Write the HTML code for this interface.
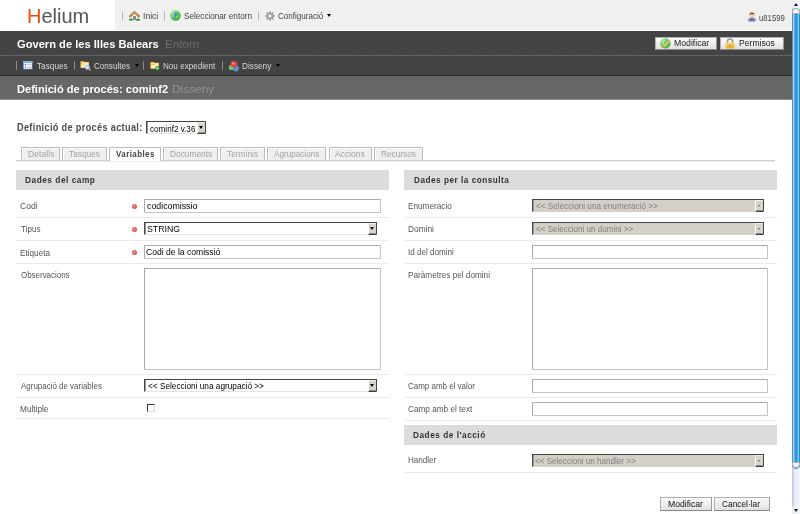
<!DOCTYPE html>
<html><head><meta charset="utf-8">
<style>
*{margin:0;padding:0;box-sizing:border-box}
html,body{width:800px;height:514px;overflow:hidden;background:#fff;font-family:"Liberation Sans",sans-serif;}
.a{position:absolute;white-space:nowrap;line-height:1}
#hdr{left:0;top:0;width:792px;height:31px;background:#f0f0f0;border-bottom:1px solid #fff}
#logo{left:0;top:0;width:115px;height:30px;background:#fff}
.sep{width:1px;background:#bdbdbd}
.tsep{width:1px;background:#8a8a8a}
.ht{font-size:8px;color:#444}
.tb{font-size:8px;color:#ddd}
#bar1{left:0;top:31px;width:792px;height:25px;background:#434343}
#dash{left:0;top:55px;width:792px;height:1px;background-image:linear-gradient(90deg,#656565 60%,#5c5c5c 60%);background-size:5px 1px}
#bar2{left:0;top:56px;width:792px;height:20px;background:#434343;border-bottom:1px solid #2a2a2a}
#bar3{left:0;top:76px;width:792px;height:24px;background:#676767;border-bottom:1px solid #8a8a8a}
.btn{height:13px;background:linear-gradient(#fafafa,#e2e2e2);border:1px solid #b0b0b0;border-bottom-color:#888;border-right-color:#999}
.tab{top:147px;height:14px;background:#efefef;border:1px solid #bdbdbd;border-bottom:none;box-shadow:inset 1px 1px #fafafa}
.tab.on{background:#fff;height:14px;z-index:2}
.box{height:20px;background:#dcdcdc}
.bt{font-size:9px;font-weight:bold;color:#3a3a3a}
.lbl{font-size:8px;color:#555}
.rl{height:1px;background:#ebebeb}
.dot{width:5px;height:5px;border-radius:2.5px;background:radial-gradient(circle at 40% 40%,#f49a9a 0,#e45a5a 45%,#d84a4a 100%)}
.inp{height:14px;border:1px solid;border-color:#aaaaaa #c4c4c4 #c4c4c4 #aaaaaa;border-radius:1px;background:#fff}
.sel{height:13px;border:1px solid #444;border-bottom-color:#e6e2dc;background:#fff;box-shadow:inset 1px 0 #9a9a9a}
.sel .arr{position:absolute;right:0;top:0;width:8px;height:12px;background:#d8d4cc;border-left:1px solid #fbfbf8;border-top:1px solid #f0eee8;border-bottom:1px solid #404040;box-shadow:inset 0 -1px #8a8a8a}
.sel .arr:after{content:"";position:absolute;left:1px;top:3px;border-left:2px solid transparent;border-right:2px solid transparent;border-top:3px solid #000}
.sel.dis{background:#d4d0c8;border-bottom-color:#d4d0c8}
.sel.dis .arr:after{left:2px;top:3.5px;border-left-width:1.5px;border-right-width:1.5px;border-top:2.5px solid #555;filter:drop-shadow(0.6px 0.6px 0 #fff)}
.st{font-size:8px;color:#000}
.dis .st{color:#8a8a8a}
</style></head><body>
<!-- header -->
<div class="a" id="hdr"></div>
<div class="a" id="logo"></div>

<div class="a sep" style="left:122px;top:11px;height:10px"></div>
<svg class="a" style="left:128px;top:10px" width="13" height="11" viewBox="0 0 13 11"><defs><linearGradient id="rf" x1="0" y1="0" x2="0" y2="1"><stop offset="0" stop-color="#e0a860"/><stop offset="1" stop-color="#a86a28"/></linearGradient></defs><rect x="3" y="4.5" width="7" height="5" fill="#fafafa"/><path d="M6.5 1 L1 6.2 L2.4 7 L6.5 3.4 L10.6 7 L12 6.2 Z" fill="url(#rf)" stroke="#b07030" stroke-width="0.5"/><rect x="2.6" y="6.2" width="0.9" height="3" fill="#9a8aa0"/><rect x="9.5" y="6.2" width="0.9" height="3" fill="#9a8aa0"/><rect x="5" y="6" width="3" height="4" fill="#8a8a8a"/><ellipse cx="3" cy="9.8" rx="2.3" ry="1.1" fill="#4aa83a"/><ellipse cx="10" cy="9.8" rx="2.3" ry="1.1" fill="#3a9a2a"/></svg>
<div class="a sep" style="left:164px;top:11px;height:10px"></div>
<svg class="a" style="left:170px;top:10px" width="11" height="11" viewBox="0 0 11 11"><defs><radialGradient id="gl" cx="0.4" cy="0.35" r="0.7"><stop offset="0" stop-color="#c8f0b0"/><stop offset="0.6" stop-color="#6ccc5a"/><stop offset="1" stop-color="#2e9a34"/></radialGradient></defs><circle cx="5.5" cy="5.5" r="5.2" fill="url(#gl)"/><path d="M5.3 2.2 Q3.2 3.5 3.6 6.2 Q4.2 8.8 5.6 9.2 Q5 7.2 6 6.2 Q7.6 5.8 8.2 4.2 Q6.6 4.6 6 3.8 Q6.4 2.8 7.4 2.4 Q6.2 1.9 5.3 2.2Z" fill="#4a90d8"/><path d="M6.6 3.2 Q8.2 2.8 8.8 4.4 Q7.6 5.6 6.4 5.2Z" fill="#2ec040"/></svg>
<div class="a sep" style="left:258px;top:11px;height:10px"></div>
<svg class="a" style="left:265px;top:10.5px" width="10" height="10" viewBox="0 0 10 10"><g fill="#9a9a9a"><circle cx="5" cy="5" r="3.3"/><rect x="4.1" y="0.3" width="1.8" height="9.4" rx="0.4"/><rect x="4.1" y="0.3" width="1.8" height="9.4" rx="0.4" transform="rotate(45 5 5)"/><rect x="4.1" y="0.3" width="1.8" height="9.4" rx="0.4" transform="rotate(90 5 5)"/><rect x="4.1" y="0.3" width="1.8" height="9.4" rx="0.4" transform="rotate(135 5 5)"/></g><circle cx="5" cy="5" r="2.4" fill="#b8b8b8"/><circle cx="5" cy="5" r="1.2" fill="#f4f4f4"/></svg>
<div class="a" style="left:327px;top:14px;border-left:2.5px solid transparent;border-right:2.5px solid transparent;border-top:3px solid #000"></div>
<svg class="a" style="left:747px;top:12px" width="10" height="10" viewBox="0 0 10 10"><path d="M0.6 8.6 Q0.8 6.4 2.4 6 L2.4 9 Z" fill="#f09030"/><path d="M9.4 8.6 Q9.2 6.4 7.6 6 L7.6 9 Z" fill="#f09030"/><path d="M1.6 9.6 Q1.6 5.6 5 5.4 Q8.4 5.6 8.4 9.6 Z" fill="#4a8ad8"/><path d="M4.6 5.6 L5.4 5.6 L5.6 8 L5 8.6 L4.4 8 Z" fill="#d83a3a"/><circle cx="5" cy="3" r="2.5" fill="#f6cfa0"/><path d="M2.4 3.2 Q2.2 0.4 5 0.4 Q7.8 0.4 7.6 3 Q6.8 1.6 5.6 2.2 Q4 1.6 2.4 3.2Z" fill="#8a3a10"/></svg>

<!-- dark bar -->
<div class="a" id="bar1"></div>

<div class="a btn" style="left:655px;top:37px;width:62px"></div>
<svg class="a" style="left:659.5px;top:38px" width="11" height="11" viewBox="0 0 11 11"><defs><radialGradient id="gm" cx="0.35" cy="0.35" r="0.75"><stop offset="0" stop-color="#c0eea0"/><stop offset="0.7" stop-color="#5cc050"/><stop offset="1" stop-color="#38a038"/></radialGradient></defs><circle cx="5.3" cy="5.4" r="5.2" fill="url(#gm)"/><path d="M3 8.5 Q3.5 5 7.5 1.8 Q5.8 5 4.4 9.2Z" fill="#4a98e0"/><path d="M2.6 9.4 L3 7.6 L8.6 2.8 L10 3.6 L4.6 8.8 Z" fill="#f2d040"/><path d="M2.6 9.4 L3 7.6 L4.6 8.8Z" fill="#e08a30"/><circle cx="9.2" cy="3.2" r="0.9" fill="#f0a050"/></svg>

<div class="a btn" style="left:720px;top:37px;width:64px"></div>
<svg class="a" style="left:725px;top:37.5px" width="10" height="11" viewBox="0 0 10 11"><path d="M2.4 5 V3.6 Q2.4 0.9 5 0.9 Q7.6 0.9 7.6 3.6 V5" fill="none" stroke="#9a9a9a" stroke-width="1.5"/><defs><linearGradient id="lk" x1="0" y1="0" x2="0" y2="1"><stop offset="0" stop-color="#f8dc70"/><stop offset="1" stop-color="#eaa82a"/></linearGradient></defs><rect x="0.6" y="4.8" width="8.8" height="5.6" rx="0.6" fill="url(#lk)"/><rect x="4.4" y="6.6" width="1.2" height="1.6" fill="#b07820"/></svg>

<div class="a" id="dash"></div>

<!-- toolbar -->
<div class="a" id="bar2"></div>
<div class="a tsep" style="left:16px;top:61px;height:9px"></div>
<svg class="a" style="left:23px;top:61px" width="10" height="9" viewBox="0 0 10 9"><rect x="0" y="0" width="9.6" height="8.6" rx="0.6" fill="#5a86c8"/><rect x="0" y="0" width="9.6" height="2" rx="0.6" fill="#8ab4ee"/><rect x="0.8" y="2" width="8" height="5.8" fill="#f4f8fc"/><circle cx="2.4" cy="3.6" r="0.8" fill="#4a78d8"/><circle cx="2.4" cy="6.2" r="0.8" fill="#4a78d8"/><rect x="4" y="3.2" width="4" height="0.8" fill="#b8b8c0"/><rect x="4" y="5.8" width="4" height="0.8" fill="#a8a8b0"/></svg>
<div class="a tsep" style="left:74px;top:61px;height:9px"></div>
<svg class="a" style="left:80px;top:60px" width="12" height="11" viewBox="0 0 12 11"><path d="M0.5 1.2 H4 L4.8 2 H9 V8 H0.5 Z" fill="#f0c050"/><rect x="1.2" y="2.6" width="7.2" height="4.8" fill="#fff4c0"/><rect x="1.2" y="3.6" width="4" height="0.8" fill="#e8b040"/><path d="M8.4 8.6 L10.6 10.6" stroke="#e0a060" stroke-width="1.4"/><circle cx="7.3" cy="7.2" r="2.2" fill="#cce4ff" stroke="#8ab0e0" stroke-width="0.6"/></svg>
<div class="a" style="left:135px;top:64px;border-left:2.5px solid transparent;border-right:2.5px solid transparent;border-top:3px solid #000"></div>
<div class="a tsep" style="left:143px;top:61px;height:9px"></div>
<svg class="a" style="left:150px;top:61px" width="10" height="10" viewBox="0 0 10 10"><path d="M0.4 1 H3.8 L4.6 1.8 H9 V7.8 H0.4 Z" fill="#f0c050"/><rect x="1.2" y="2.4" width="7" height="4.8" fill="#fff4c0"/><rect x="1.2" y="3.4" width="4" height="0.8" fill="#e8b040"/><circle cx="7.4" cy="7.2" r="2.3" fill="#3a9a2a"/><path d="M6.6 6 L8.6 7.2 L6.6 8.4Z" fill="#fff"/></svg>
<div class="a tsep" style="left:222px;top:61px;height:9px"></div>
<svg class="a" style="left:228px;top:60px" width="12" height="12" viewBox="0 0 12 12"><circle cx="3.4" cy="7.4" r="2.6" fill="#78c868"/><circle cx="8" cy="8.6" r="3" fill="#5a8ed0"/><circle cx="6" cy="4.2" r="3.3" fill="#e04a4a"/><circle cx="5.2" cy="3.4" r="1" fill="#f8a0a0"/></svg>
<div class="a" style="left:276px;top:64px;border-left:2.5px solid transparent;border-right:2.5px solid transparent;border-top:3px solid #000"></div>

<!-- title bar -->
<div class="a" id="bar3"></div>


<!-- content -->

<div class="a sel" style="left:146px;top:121px;width:60px"><div class="arr"></div></div>

<div class="a" style="left:16px;top:160px;width:759px;height:1px;background:#cfcfcf;z-index:1"></div><div class="a" style="left:16px;top:161px;width:759px;height:1px;background:#ececec;z-index:1"></div>
<div class="a tab" style="left:21px;width:39px"></div>
<div class="a tab" style="left:62px;width:45px"></div>
<div class="a tab on" style="left:109px;width:52px"></div>
<div class="a tab" style="left:163px;width:55px"></div>
<div class="a tab" style="left:220px;width:45px"></div>
<div class="a tab" style="left:267px;width:59px"></div>
<div class="a tab" style="left:329px;width:43px"></div>
<div class="a tab" style="left:374px;width:49px"></div>

<!-- left panel -->
<div class="a box" style="left:16px;top:170px;width:373px"></div>
<div class="a rl" style="left:16px;top:217px;width:373px"></div>
<div class="a rl" style="left:16px;top:240px;width:373px"></div>
<div class="a rl" style="left:16px;top:263px;width:373px"></div>
<div class="a rl" style="left:16px;top:374px;width:373px"></div>
<div class="a rl" style="left:16px;top:397px;width:373px"></div>
<div class="a rl" style="left:16px;top:418px;width:373px"></div>
<div class="a dot" style="left:131.8px;top:203.6px"></div>
<div class="a dot" style="left:131.8px;top:226.6px"></div>
<div class="a dot" style="left:131.8px;top:249.6px"></div>
<div class="a inp" style="left:144px;top:199px;width:237px"></div>
<div class="a sel" style="left:144px;top:222px;width:233px"><div class="arr"></div></div>
<div class="a inp" style="left:144px;top:245px;width:237px"></div>
<div class="a inp" style="left:144px;top:268px;width:237px;height:102px"></div>
<div class="a sel" style="left:144px;top:379px;width:233px"><div class="arr"></div></div>
<div class="a" style="left:147px;top:404px;width:8px;height:8px;border:1px solid #333;border-right-color:#ddd;border-bottom-color:#ddd;background:#fff"></div>

<!-- right panel -->
<div class="a box" style="left:404px;top:170px;width:373px"></div>
<div class="a rl" style="left:404px;top:217px;width:373px"></div>
<div class="a rl" style="left:404px;top:240px;width:373px"></div>
<div class="a rl" style="left:404px;top:263px;width:373px"></div>
<div class="a rl" style="left:404px;top:374px;width:373px"></div>
<div class="a rl" style="left:404px;top:397px;width:373px"></div>
<div class="a rl" style="left:404px;top:420px;width:373px"></div>
<div class="a sel dis" style="left:532px;top:199px;width:232px"><div class="arr"></div></div>
<div class="a sel dis" style="left:532px;top:222px;width:232px"><div class="arr"></div></div>
<div class="a inp" style="left:532px;top:245px;width:236px"></div>
<div class="a inp" style="left:532px;top:268px;width:236px;height:102px"></div>
<div class="a inp" style="left:532px;top:379px;width:236px"></div>
<div class="a inp" style="left:532px;top:402px;width:236px"></div>

<div class="a box" style="left:404px;top:425px;width:373px"></div>
<div class="a sel dis" style="left:532px;top:454px;width:232px"><div class="arr"></div></div>
<div class="a rl" style="left:404px;top:472px;width:373px"></div>

<div class="a btn" style="left:660px;top:497px;width:52px;height:14px"></div>

<div class="a btn" style="left:714px;top:497px;width:56px;height:14px"></div>


<!-- scrollbar -->
<div class="a" style="left:792px;top:0;width:8px;height:514px;background:linear-gradient(90deg,#c4c8dc 0,#c4c8dc 1px,#d8dcea 1px,#d8dcea 2px,#e4e7f2 2px,#e4e7f2 3px,#eceef8 3px,#eceef8 6px,#f4f5fc 6px)"></div>
<div class="a" style="left:792px;top:8px;width:8px;height:461px;border-radius:4px;background:linear-gradient(90deg,#5090c4 0,#5090c4 1px,#a2d2ec 1px,#a2d2ec 2px,#60aede 2px,#60aede 3px,#3e98d8 3px,#3e98d8 4px,#348eda 4px,#348eda 5px,#46b0ea 5px,#46b0ea 6px,#62d4f4 6px,#62d4f4 7px,#4284bc 7px)"></div>
<div class="a" style="left:792px;top:8px;width:8px;height:6px;border-radius:4px 4px 0 0;background:#f4f6fa;border:1px solid #aab"></div>
<div class="a" style="left:792px;top:462px;width:8px;height:6px;border-radius:0 0 4px 4px;background:#f4f6fa;border:1px solid #aab"></div>
<div class="a" style="left:792px;top:506px;width:8px;height:8px;background:linear-gradient(90deg,#e8eaf2,#f6f7fc)"></div><div class="a" style="left:792px;top:0;width:8px;height:8px;background:linear-gradient(90deg,#e8eaf2,#f6f7fc)"></div>
<div class="a" style="left:794px;top:3px;border-left:2px solid transparent;border-right:2px solid transparent;border-bottom:3px solid #111"></div>
<div class="a" style="left:794px;top:508.5px;border-left:2px solid transparent;border-right:2px solid transparent;border-top:3px solid #111"></div>
<div id="helium" class="a" style="left:27.00px;top:7.00px;font-size:19.50px;color:#555;transform:scaleX(1.0259);transform-origin:0 0;z-index:3"><span style="color:#f04a10">H</span>elium</div>
<div id="inici" class="a" style="left:142.50px;top:11.00px;font-size:9.50px;color:#444;transform:scaleX(0.9009);transform-origin:0 0;z-index:3">Inici</div>
<div id="selent" class="a" style="left:183.55px;top:11.00px;font-size:9.50px;color:#444;transform:scaleX(0.8577);transform-origin:0 0;z-index:3">Seleccionar entorn</div>
<div id="config" class="a" style="left:277.70px;top:11.00px;font-size:9.50px;color:#444;transform:scaleX(0.8498);transform-origin:0 0;z-index:3">Configuració</div>
<div id="user" class="a" style="left:759.00px;top:13.00px;font-size:9.50px;color:#444;transform:scaleX(0.8133);transform-origin:0 0;z-index:3">u81599</div>
<div id="govern" class="a" style="left:16.50px;top:39.00px;font-size:11.50px;font-weight:bold;color:#fff;transform:scaleX(0.9687);transform-origin:0 0;z-index:3">Govern de les Illes Balears</div>
<div id="entorn" class="a" style="left:165.40px;top:39.00px;font-size:11.50px;color:#6e6e6e;transform:scaleX(1.0110);transform-origin:0 0;z-index:3">Entorn</div>
<div id="hmod" class="a" style="left:673.50px;top:39.00px;font-size:8.50px;color:#222;transform:scaleX(1.0224);transform-origin:0 0;z-index:3">Modificar</div>
<div id="hperm" class="a" style="left:739.35px;top:39.00px;font-size:8.50px;color:#222;transform:scaleX(1.0118);transform-origin:0 0;z-index:3">Permisos</div>
<div id="tasq" class="a" style="left:36.50px;top:61.00px;font-size:9.50px;color:#d8d8d8;transform:scaleX(0.8681);transform-origin:0 0;z-index:3">Tasques</div>
<div id="cons" class="a" style="left:94.00px;top:61.00px;font-size:9.50px;color:#d8d8d8;transform:scaleX(0.8515);transform-origin:0 0;z-index:3">Consultes</div>
<div id="nou" class="a" style="left:162.50px;top:61.00px;font-size:9.50px;color:#d8d8d8;transform:scaleX(0.8540);transform-origin:0 0;z-index:3">Nou expedient</div>
<div id="diss1" class="a" style="left:242.35px;top:61.00px;font-size:9.50px;color:#d8d8d8;transform:scaleX(0.8664);transform-origin:0 0;z-index:3">Disseny</div>
<div id="deft" class="a" style="left:16.80px;top:84.00px;font-size:11.50px;font-weight:bold;color:#fff;transform:scaleX(0.9615);transform-origin:0 0;z-index:3">Definició de procés: cominf2</div>
<div id="diss2" class="a" style="left:171.75px;top:84.00px;font-size:11.50px;color:#929292;transform:scaleX(1.0323);transform-origin:0 0;z-index:3">Disseny</div>
<div id="defact" class="a" style="left:16.75px;top:122.00px;font-size:10.50px;font-weight:bold;letter-spacing:0.40px;color:#4c4c4c;transform:scaleX(0.8697);transform-origin:0 0;z-index:3">Definició de procés actual:</div>
<div id="cominf" class="a" style="left:150.10px;top:124.00px;font-size:9.50px;color:#000;transform:scaleX(0.8539);transform-origin:0 0;z-index:3">cominf2 v.36</div>
<div id="t1" class="a" style="left:27.50px;top:149.00px;font-size:9.50px;color:#a4a4a4;transform:scaleX(0.9140);transform-origin:0 0;z-index:3">Detalls</div>
<div id="t2" class="a" style="left:69.35px;top:149.00px;font-size:9.50px;color:#a4a4a4;transform:scaleX(0.8771);transform-origin:0 0;z-index:3">Tasques</div>
<div id="t3" class="a" style="left:116.15px;top:149.00px;font-size:9.50px;font-weight:bold;letter-spacing:0.50px;color:#444;transform:scaleX(0.8396);transform-origin:0 0;z-index:3">Variables</div>
<div id="t4" class="a" style="left:169.50px;top:149.00px;font-size:9.50px;color:#a4a4a4;transform:scaleX(0.8780);transform-origin:0 0;z-index:3">Documents</div>
<div id="t5" class="a" style="left:227.05px;top:149.00px;font-size:9.50px;color:#a4a4a4;transform:scaleX(0.8803);transform-origin:0 0;z-index:3">Terminis</div>
<div id="t6" class="a" style="left:274.30px;top:149.00px;font-size:9.50px;color:#a4a4a4;transform:scaleX(0.8569);transform-origin:0 0;z-index:3">Agrupacions</div>
<div id="t7" class="a" style="left:335.45px;top:149.00px;font-size:9.50px;color:#a4a4a4;transform:scaleX(0.8951);transform-origin:0 0;z-index:3">Accions</div>
<div id="t8" class="a" style="left:381.20px;top:149.00px;font-size:9.50px;color:#a4a4a4;transform:scaleX(0.8689);transform-origin:0 0;z-index:3">Recursos</div>
<div id="b1" class="a" style="left:25.30px;top:175.00px;font-size:9.50px;font-weight:bold;letter-spacing:0.60px;color:#333;transform:scaleX(0.8720);transform-origin:0 0;z-index:3">Dades del camp</div>
<div id="b2" class="a" style="left:413.60px;top:175.00px;font-size:9.50px;font-weight:bold;letter-spacing:0.60px;color:#333;transform:scaleX(0.8609);transform-origin:0 0;z-index:3">Dades per la consulta</div>
<div id="b3" class="a" style="left:413.45px;top:430.00px;font-size:9.50px;font-weight:bold;letter-spacing:0.60px;color:#333;transform:scaleX(0.8696);transform-origin:0 0;z-index:3">Dades de l'acció</div>
<div id="l1" class="a" style="left:20.00px;top:201.00px;font-size:9.50px;color:#555;transform:scaleX(0.9019);transform-origin:0 0;z-index:3">Codi</div>
<div id="l2" class="a" style="left:20.50px;top:224.00px;font-size:9.50px;color:#555;transform:scaleX(0.8494);transform-origin:0 0;z-index:3">Tipus</div>
<div id="l3" class="a" style="left:20.35px;top:248.00px;font-size:9.50px;color:#555;transform:scaleX(0.8604);transform-origin:0 0;z-index:3">Etiqueta</div>
<div id="l4" class="a" style="left:20.85px;top:270.00px;font-size:9.50px;color:#555;transform:scaleX(0.8364);transform-origin:0 0;z-index:3">Observacions</div>
<div id="l5" class="a" style="left:21.15px;top:381.00px;font-size:9.50px;color:#555;transform:scaleX(0.8377);transform-origin:0 0;z-index:3">Agrupació de variables</div>
<div id="l6" class="a" style="left:19.65px;top:404.00px;font-size:9.50px;color:#555;transform:scaleX(0.8691);transform-origin:0 0;z-index:3">Multiple</div>
<div id="r1" class="a" style="left:407.65px;top:201.00px;font-size:9.50px;color:#555;transform:scaleX(0.8650);transform-origin:0 0;z-index:3">Enumeracio</div>
<div id="r2" class="a" style="left:408.05px;top:224.00px;font-size:9.50px;color:#555;transform:scaleX(0.8757);transform-origin:0 0;z-index:3">Domini</div>
<div id="r3" class="a" style="left:407.80px;top:247.00px;font-size:9.50px;color:#555;transform:scaleX(0.8510);transform-origin:0 0;z-index:3">Id del domini</div>
<div id="r4" class="a" style="left:408.05px;top:270.00px;font-size:9.50px;color:#555;transform:scaleX(0.8628);transform-origin:0 0;z-index:3">Paràmetres pel domini</div>
<div id="r5" class="a" style="left:408.00px;top:381.00px;font-size:9.50px;color:#555;transform:scaleX(0.8390);transform-origin:0 0;z-index:3">Camp amb el valor</div>
<div id="r6" class="a" style="left:408.00px;top:404.00px;font-size:9.50px;color:#555;transform:scaleX(0.8633);transform-origin:0 0;z-index:3">Camp amb el text</div>
<div id="r7" class="a" style="left:408.05px;top:455.00px;font-size:9.50px;color:#555;transform:scaleX(0.8493);transform-origin:0 0;z-index:3">Handler</div>
<div id="i1" class="a" style="left:146.55px;top:201.00px;font-size:9.50px;color:#000;transform:scaleX(0.9253);transform-origin:0 0;z-index:3">codicomissio</div>
<div id="i2" class="a" style="left:147.00px;top:224.00px;font-size:9.50px;color:#000;transform:scaleX(0.9198);transform-origin:0 0;z-index:3">STRING</div>
<div id="i3" class="a" style="left:146.15px;top:247.00px;font-size:9.50px;color:#000;transform:scaleX(0.9022);transform-origin:0 0;z-index:3">Codi de la comissió</div>
<div id="i4" class="a" style="left:147.85px;top:381.00px;font-size:9.50px;color:#000;transform:scaleX(0.8674);transform-origin:0 0;z-index:3">&lt;&lt; Seleccioni una agrupació &gt;&gt;</div>
<div id="d1" class="a" style="left:535.55px;top:201.00px;font-size:9.50px;color:#808080;transform:scaleX(0.8604);transform-origin:0 0;z-index:3">&lt;&lt; Seleccioni una enumeració &gt;&gt;</div>
<div id="d2" class="a" style="left:535.55px;top:224.00px;font-size:9.50px;color:#808080;transform:scaleX(0.8476);transform-origin:0 0;z-index:3">&lt;&lt; Seleccioni un domini &gt;&gt;</div>
<div id="d3" class="a" style="left:535.40px;top:456.00px;font-size:9.50px;color:#808080;transform:scaleX(0.8503);transform-origin:0 0;z-index:3">&lt;&lt; Seleccioni un handler &gt;&gt;</div>
<div id="bm" class="a" style="left:668.35px;top:500.00px;font-size:8.50px;color:#111;transform:scaleX(1.0134);transform-origin:0 0;z-index:3">Modificar</div>
<div id="bc" class="a" style="left:722.40px;top:500.00px;font-size:8.50px;color:#111;transform:scaleX(0.9809);transform-origin:0 0;z-index:3">Cancel·lar</div>
</body></html>
